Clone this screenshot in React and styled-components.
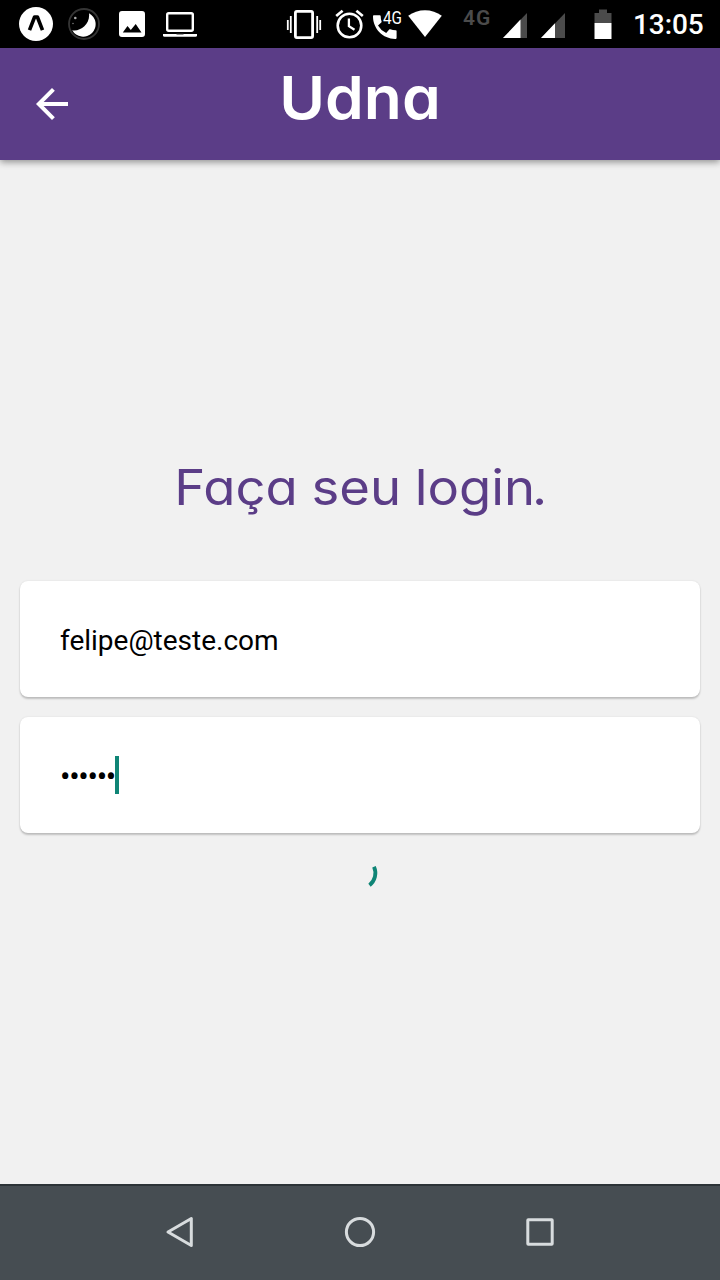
import React from "react";
import styled, { createGlobalStyle } from "styled-components";

const GlobalStyle = createGlobalStyle`
  * { box-sizing: border-box; }
  body { margin: 0; background: #f1f1f1; }
  svg { display: block; flex: none; }
`;

const Screen = styled.div`
  display: flex;
  flex-direction: column;
  width: 720px;
  height: 1280px;
  overflow: hidden;
  background: #f1f1f1;
  font-family: Roboto, sans-serif;
`;

const StatusBar = styled.div`
  flex: none;
  display: flex;
  align-items: center;
  height: 48px;
  padding: 0 16px 0 12px;
  background: #000;
  color: #fff;
`;

const Notification = styled.div`
  display: flex;
  justify-content: center;
  width: 48px;
`;

const SystemIcons = styled.div`
  display: flex;
  align-items: center;
  margin-left: auto;
`;

const SystemIcon = styled.svg`
  margin-left: ${(p) => p.$gap || 0}px;
`;

const Network = styled.span`
  align-self: flex-start;
  margin: -2px 0 0 20px;
  width: 30px;
  color: #4b4b4b;
  font-size: 21px;
  font-weight: 600;
  line-height: 24px;
  letter-spacing: 1px;
`;

const Clock = styled.time`
  margin-left: 20px;
  width: 71px;
  font-size: 28px;
  font-weight: 500;
  line-height: 48px;
  padding-top: 2px;
  letter-spacing: -0.1px;
  white-space: nowrap;
`;

const Header = styled.header`
  flex: none;
  display: grid;
  grid-template-columns: 104px 1fr 104px;
  align-items: center;
  height: 112px;
  background: #5b3d87;
  box-shadow: 0 2px 7px rgba(0, 0, 0, 0.42);
  z-index: 1;
`;

const BackButton = styled.button`
  width: 48px;
  height: 48px;
  margin-left: 28px;
  padding: 0;
  border: 0;
  background: none;
`;

const Title = styled.h1`
  margin: 0;
  padding-bottom: 13px;
  color: #fff;
  text-align: center;
  font: 600 59px/70px Inter, sans-serif;
  font-feature-settings: "cv11";
  transform: scaleX(1.055);
`;

const Main = styled.main`
  flex: 1;
  display: flex;
  flex-direction: column;
  align-items: center;
  padding: 288px 20px 0;
`;

const Heading = styled.h2`
  margin: 0 0 53px;
  padding-left: 2px;
  color: #5b3d87;
  font: 400 49px/80px Inter, sans-serif;
  font-feature-settings: "cv11";
  word-spacing: -1px;
  white-space: nowrap;
  transform: scaleX(1.074);
`;

const TightLetter = styled.span`
  letter-spacing: -3px;
`;

const Form = styled.form`
  display: flex;
  flex-direction: column;
  align-items: center;
  gap: 20px;
  width: 100%;
`;

const Field = styled.div`
  display: flex;
  align-items: center;
  width: 100%;
  height: 116px;
  padding: 0 40px;
  border-radius: 8px;
  background: #fff;
  box-shadow: 0 2px 2px rgba(0, 0, 0, 0.2), 0 0 2px rgba(0, 0, 0, 0.1);
  color: #000;
`;

const Value = styled.span`
  padding-top: 4px;
  font-size: 28px;
  line-height: 38px;
`;

const Mask = styled(Value)`
  font-size: 31px;
  letter-spacing: -1.3px;
`;

const Caret = styled.span`
  width: 4px;
  height: 38px;
  background: #0f8576;
`;

const NavBar = styled.nav`
  flex: none;
  display: flex;
  justify-content: center;
  align-items: center;
  height: 96px;
  border-top: 2px solid #2c3337;
  background: #464d52;
`;

const NavButton = styled.button`
  display: flex;
  justify-content: center;
  width: 180px;
  padding: 0;
  border: 0;
  background: none;
`;

function Notifications() {
  return (
    <>
      <Notification>
        <svg width="36" height="36" viewBox="0 0 36 36">
          <circle cx="18" cy="18" r="17" fill="#fff" />
          <path d="M11.5 24.2 16.6 11h2.8l5.1 13.2" fill="none" stroke="#000" strokeWidth="3.6" strokeLinejoin="round" />
        </svg>
      </Notification>
      <Notification>
        <svg width="36" height="36" viewBox="0 0 36 36">
          <circle cx="18" cy="18" r="15" fill="none" stroke="#353535" strokeWidth="1.8" />
          <path d="M23 7.2A12.5 12.5 0 1 1 6.2 24.3C14 26 24.5 18.5 23 7.2Z" fill="#fff" />
          <circle cx="9.3" cy="12" r="1.3" fill="#aaa" />
          <circle cx="7" cy="17.5" r="0.8" fill="#777" />
        </svg>
      </Notification>
      <Notification>
        <svg width="36" height="36" viewBox="0 0 36 36">
          <path fillRule="evenodd" fill="#fff" d="M8 5h20a3 3 0 0 1 3 3v20a3 3 0 0 1-3 3H8a3 3 0 0 1-3-3V8a3 3 0 0 1 3-3Zm.8 21.5h18.7L21.7 18l-4.9 6-3.3-4Z" />
        </svg>
      </Notification>
      <Notification>
        <svg width="36" height="36" viewBox="0 0 36 36">
          <rect x="5.2" y="7.2" width="25.6" height="17.6" rx="1.5" fill="none" stroke="#fff" strokeWidth="2.4" />
          <path d="M1 28h34v1.3a1.5 1.5 0 0 1-1.5 1.5h-31A1.5 1.5 0 0 1 1 29.3Z" fill="#fff" />
          <path d="M14.5 28.3h7" stroke="#777" strokeWidth="1" />
        </svg>
      </Notification>
    </>
  );
}

function System() {
  return (
    <SystemIcons>
      <SystemIcon width="36" height="32" viewBox="0 0 36 32">
        <rect x="9.4" y="3.4" width="17.2" height="26.2" rx="1.5" fill="none" stroke="#fff" strokeWidth="2.8" />
        <path d="M1.8 12v10M4.8 8v17M31.2 8v17M34.2 12v10" stroke="#fff" strokeWidth="1.8" />
      </SystemIcon>
      <SystemIcon $gap={12} width="30" height="32" viewBox="0 0 30 32">
        <g fill="none" stroke="#fff">
          <circle cx="15.5" cy="17.5" r="11.8" strokeWidth="2.6" />
          <path d="M14.9 10.5v7.6l5.6 3.6" strokeWidth="2.3" />
          <path d="m2.2 8 6.4-5.3M28.8 8 22.4 2.7" strokeWidth="2.7" />
        </g>
      </SystemIcon>
      <SystemIcon $gap={7} width="35" height="32" viewBox="0 0 35 32">
        <path d="M3 7.3h5.8c.5 0 .9.4.9.9 0 1.8.3 3.6.9 5.2.1.4 0 .8-.3 1.1L7 17.4a19 19 0 0 0 8.2 7.7l3-3.5c.3-.3.7-.4 1.1-.3 1.7.6 3.5.9 5.3.9.6 0 1 .4 1 .9v6.4c0 1-.5 1.5-1.4 1.5C11.9 31 2 20.7 2 8.6 2 7.7 2.3 7.3 3 7.3Z" fill="#fff" />
        <text x="12" y="16" fill="#fff" fontFamily="Roboto, sans-serif" fontSize="18" textLength="19" lengthAdjust="spacingAndGlyphs">4G</text>
      </SystemIcon>
      <SystemIcon $gap={1} width="36" height="32" viewBox="0 0 36 32">
        <path d="M1.2 7.8C10.6.3 25.4.3 34.8 7.8L18 29Z" fill="#fff" />
      </SystemIcon>
      <Network>4G</Network>
      <SystemIcon $gap={9} width="26" height="32" viewBox="0 0 26 32">
        <path d="M25 5v25H1Z" fill="#4b4b4b" />
        <path d="M18.5 11.6V30H1Z" fill="#fff" />
      </SystemIcon>
      <SystemIcon $gap={12} width="26" height="32" viewBox="0 0 26 32">
        <path d="M25 5v25H1Z" fill="#4b4b4b" />
        <path d="M15 15.2V30H1Z" fill="#fff" />
      </SystemIcon>
      <SystemIcon $gap={27} width="20" height="32" viewBox="0 0 20 32">
        <path d="M6 1.5h8V5h4.5v10h-17V5H6Z" fill="#4b4b4b" />
        <path d="M1.5 15h17v16h-17Z" fill="#fff" />
      </SystemIcon>
    </SystemIcons>
  );
}

export default function App() {
  return (
    <Screen>
      <GlobalStyle />
      <StatusBar>
        <Notifications />
        <System />
        <Clock>13:05</Clock>
      </StatusBar>
      <Header>
        <BackButton aria-label="Voltar">
          <svg width="48" height="48" viewBox="0 0 24 24">
            <path d="M20 11H7.83l5.59-5.59L12 4l-8 8 8 8 1.41-1.41L7.83 13H20v-2z" fill="#fff" />
          </svg>
        </BackButton>
        <Title>Udna</Title>
      </Header>
      <Main>
        <Heading>
          Faça seu logi<TightLetter>n</TightLetter>.
        </Heading>
        <Form>
          <Field>
            <Value>felipe@teste.com</Value>
          </Field>
          <Field>
            <Mask>••••••</Mask>
            <Caret />
          </Field>
          <svg width="40" height="40" viewBox="0 0 40 40">
            <path d="M34 13.8A15.3 15.3 0 0 1 29.5 32.2" fill="none" stroke="#0f8576" strokeWidth="3.8" />
          </svg>
        </Form>
      </Main>
      <NavBar>
        <NavButton aria-label="Voltar">
          <svg width="36" height="36" viewBox="0 0 36 36">
            <path d="M29.3 3.5v27L6 17Z" fill="none" stroke="#d8dcde" strokeWidth="3" strokeLinejoin="round" />
          </svg>
        </NavButton>
        <NavButton aria-label="Início">
          <svg width="36" height="36" viewBox="0 0 36 36">
            <circle cx="18" cy="17" r="13.6" fill="none" stroke="#d8dcde" strokeWidth="3" />
          </svg>
        </NavButton>
        <NavButton aria-label="Recentes">
          <svg width="36" height="36" viewBox="0 0 36 36">
            <rect x="5.8" y="4.8" width="24.4" height="24.4" rx="0.5" fill="none" stroke="#d8dcde" strokeWidth="3" />
          </svg>
        </NavButton>
      </NavBar>
    </Screen>
  );
}
